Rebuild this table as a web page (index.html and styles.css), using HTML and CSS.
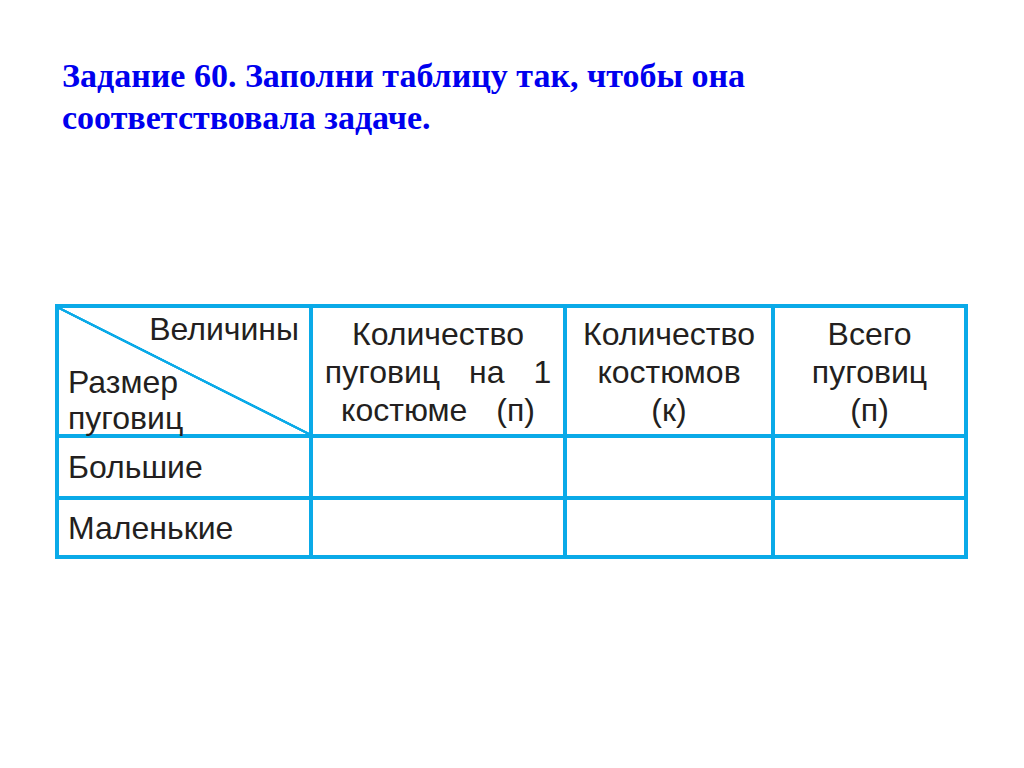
FILE: index.html
```html
<!DOCTYPE html>
<html lang="ru">
<head>
<meta charset="utf-8">
<title>Задание 60</title>
<link rel="stylesheet" href="styles.css">
</head>
<body>
<div class="slide">
  <h1 class="title">Задание 60. Заполни таблицу так, чтобы она соответствовала задаче.</h1>
  <table class="grid">
    <colgroup>
      <col class="c1"><col class="c2"><col class="c3"><col class="c4">
    </colgroup>
    <tr class="head">
      <th class="corner">
        <span class="corner-top">Величины</span>
        <span class="corner-bottom">Размер<br>пуговиц</span>
      </th>
      <th class="hcell wide"><span class="ln">Количество</span><span class="ln">пуговиц на 1</span><span class="ln">костюме (п)</span></th>
      <th class="hcell"><span class="ln">Количество</span><span class="ln">костюмов</span><span class="ln">(к)</span></th>
      <th class="hcell"><span class="ln">Всего</span><span class="ln">пуговиц</span><span class="ln">(п)</span></th>
    </tr>
    <tr class="row1">
      <th class="rowhead">Большие</th><td></td><td></td><td></td>
    </tr>
    <tr class="row2">
      <th class="rowhead">Маленькие</th><td></td><td></td><td></td>
    </tr>
  </table>
</div>
</body>
</html>
```
FILE: styles.css
```css
html, body {
  margin: 0;
  padding: 0;
  background: #ffffff;
}

.slide {
  width: 1024px;
  height: 768px;
  padding-top: 55px;
  box-sizing: border-box;
}

.title {
  margin: 0 0 0 62px;
  width: 760px;
  font-family: "Liberation Serif", "Times New Roman", serif;
  font-weight: bold;
  font-size: 34px;
  line-height: 42px;
  color: #0000ee;
}

.grid {
  margin: 165px 0 0 55px;
  border-collapse: collapse;
  table-layout: fixed;
  width: 913px;
  font-family: "Liberation Sans", Arial, sans-serif;
  font-size: 32px;
  color: #231f20;
}

.c1 { width: 254px; }
.c2 { width: 254px; }
.c3 { width: 208px; }
.c4 { width: 193px; }

.grid th,
.grid td {
  border: 4px solid #0aaae8;
  padding: 0;
  font-weight: normal;
}

.head { height: 130px; }
.row1 { height: 62px; }
.row2 { height: 59px; }

.grid .corner {
  vertical-align: top;
  text-align: left;
  line-height: 36px;
  background: linear-gradient(to top right,
    transparent calc(50% - 1.6px),
    #0aaae8 calc(50% - 1px),
    #0aaae8 calc(50% + 1px),
    transparent calc(50% + 1.6px));
}

.corner-top {
  display: block;
  text-align: right;
  padding: 3px 10px 0 0;
}

.corner-bottom {
  display: block;
  padding-left: 9px;
  margin-top: 17px;
  margin-bottom: -3px;
}

.grid .hcell {
  vertical-align: top;
  text-align: center;
  line-height: 38px;
  padding-top: 7px;
}

.ln { display: block; }

.wide .ln { word-spacing: 20px; }

.grid .rowhead {
  text-align: left;
  vertical-align: middle;
  padding-left: 9px;
  line-height: 36px;
}
```
